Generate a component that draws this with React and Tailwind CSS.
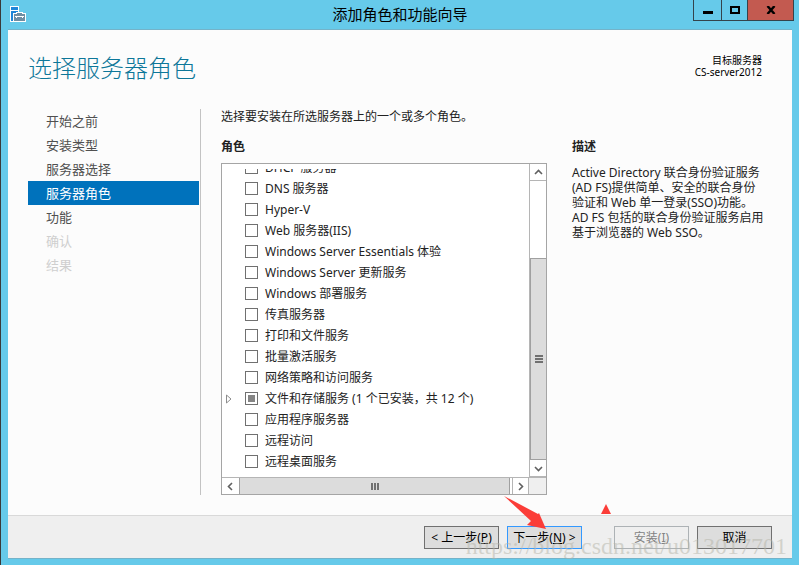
import React, { useState } from "react";

const steps = [
  { name: "开始之前" },
  { name: "安装类型" },
  { name: "服务器选择" },
  { name: "服务器角色", active: true },
  { name: "功能" },
  { name: "确认", disabled: true },
  { name: "结果", disabled: true },
];

const roles = [
  { id: "dhcp", name: "DHCP 服务器" },
  { id: "dns", name: "DNS 服务器" },
  { id: "hyperv", name: "Hyper-V" },
  { id: "iis", name: "Web 服务器(IIS)" },
  { id: "essentials", name: "Windows Server Essentials 体验" },
  { id: "wsus", name: "Windows Server 更新服务" },
  { id: "wds", name: "Windows 部署服务" },
  { id: "fax", name: "传真服务器" },
  { id: "print", name: "打印和文件服务" },
  { id: "volume", name: "批量激活服务" },
  { id: "npas", name: "网络策略和访问服务" },
  { id: "storage", name: "文件和存储服务 (1 个已安装，共 12 个)", partial: true },
  { id: "app", name: "应用程序服务器" },
  { id: "remote", name: "远程访问" },
  { id: "rds", name: "远程桌面服务" },
];

const ServerIcon = () => (
  <svg width="16" height="16" viewBox="0 0 16 16" className="shrink-0" shapeRendering="crispEdges" aria-hidden="true">
    <rect x="0" y="0" width="9" height="16" fill="#fff" />
    <rect x="1" y="1" width="7" height="3" fill="#1f86d8" />
    <rect x="1" y="5" width="7" height="10" fill="#1f86d8" />
    <path d="M3 7h3V6h7v1h3v9H3z" fill="#fff" />
    <path d="M4 8h11v7H4z" fill="#6f8ea3" />
    <path d="M7 7h5v1H7z" fill="#6f8ea3" />
    <path d="M5 10h9v1H5zM6 11h1v1H6zM12 11h1v1h-1z" fill="#fff" />
  </svg>
);

const Chevron = ({ d }) => (
  <svg width="9" height="9" viewBox="0 0 9 9" aria-hidden="true">
    <path d={d} fill="none" stroke="#606060" strokeWidth="1.6" />
  </svg>
);

const TitleBar = () => (
  <header className="relative flex h-[29px] items-start justify-end">
    <div className="absolute top-[6px] left-[9px]">
      <ServerIcon />
    </div>
    <h1 className="absolute inset-x-0 top-0 text-center text-[15px] leading-[29px] text-black">
      添加角色和功能向导
    </h1>
    <div className="relative mr-[5px] flex h-[21px] border border-t-0 border-[#34434b]">
      <button aria-label="最小化" className="flex w-[28px] items-center justify-center border-r border-[#34434b]">
        <span className="mt-1 h-[3px] w-[10px] bg-black" />
      </button>
      <button aria-label="最大化" className="flex w-[26px] items-center justify-center border-r border-[#34434b]">
        <span className="h-2 w-[10px] border-2 border-black" />
      </button>
      <button aria-label="关闭" className="flex w-[45px] items-center justify-center bg-[#c35a50]">
        <svg width="10" height="8" viewBox="0 0 10 8" aria-hidden="true">
          <path d="M1.5 0L8.5 8M8.5 0L1.5 8" stroke="#000" strokeWidth="2.4" />
        </svg>
      </button>
    </div>
  </header>
);

const StepNav = () => (
  <nav className="w-[173px] shrink-0 border-r border-[#c3c3c3] pr-px text-[13px] leading-6">
    {steps.map((s) => (
      <a
        key={s.name}
        href="#"
        aria-disabled={s.disabled}
        className={
          s.active
            ? "block bg-[#0072bc] pl-[18px] text-white"
            : s.disabled
            ? "block pl-[18px] text-[#cfcfcf]"
            : "block pl-[18px] text-[#505050]"
        }
      >
        {s.name}
      </a>
    ))}
  </nav>
);

const RoleRow = ({ role, checked, onToggle }) => (
  <li className="flex h-[21px] shrink-0 items-center">
    <span className="flex w-[23px] shrink-0 pl-1">
      {role.partial && (
        <svg width="6" height="10" viewBox="0 0 6 10" aria-hidden="true">
          <path d="M0.5 1L5 5L0.5 9z" fill="#fff" stroke="#8c8c8c" />
        </svg>
      )}
    </span>
    <input
      id={role.id}
      type="checkbox"
      checked={checked}
      onChange={onToggle}
      className={
        role.partial
          ? "size-[13px] shrink-0 appearance-none border border-[#707070] bg-[#858585] bg-clip-content p-[2px]"
          : "size-[13px] shrink-0 appearance-none border border-[#707070] bg-white checked:bg-[#858585]"
      }
    />
    <label htmlFor={role.id} className="pl-[7px] whitespace-nowrap">
      {role.name}
    </label>
  </li>
);

const RoleList = () => {
  const [selected, setSelected] = useState([]);

  const toggle = (id) => {
    setSelected(selected.includes(id) ? selected.filter((x) => x !== id) : [...selected, id]);
  };

  return (
    <div className="flex min-h-0 flex-1 flex-col border border-[#a5a5a5] bg-white">
      <div className="flex min-h-0 flex-1">
        <div className="flex min-w-0 flex-1 pt-[5px]">
          {/* scrolled to the end, so the first row is cut at the top */}
          <ul className="flex h-[308px] flex-1 flex-col justify-end overflow-hidden pb-[5px]">
            {roles.map((r) => (
              <RoleRow key={r.id} role={r} checked={selected.includes(r.id)} onToggle={() => toggle(r.id)} />
            ))}
          </ul>
        </div>
        <div className="flex w-[17px] flex-col border-l border-[#b5b5b5]">
          <button aria-label="向上" className="flex h-[17px] items-center justify-center border-b border-[#b5b5b5]">
            <Chevron d="M1 6L4.5 2.5L8 6" />
          </button>
          <div className="flex-[78]" />
          <div className="flex flex-[201] flex-col items-center justify-center gap-px border border-r-0 border-[#a0a0a0] bg-[#dcdcdc]">
            <span className="h-[2px] w-2 bg-[#707070]" />
            <span className="h-[2px] w-2 bg-[#707070]" />
            <span className="h-[2px] w-2 bg-[#707070]" />
          </div>
          <button aria-label="向下" className="flex h-[17px] items-center justify-center border-b border-[#b5b5b5]">
            <Chevron d="M1 3L4.5 6.5L8 3" />
          </button>
        </div>
      </div>
      <div className="flex h-[17px] border-t border-[#b5b5b5]">
        <button aria-label="向左" className="flex w-[17px] items-center justify-center">
          <Chevron d="M6 1L2.5 4.5L6 8" />
        </button>
        <div className="flex flex-1 items-center justify-center gap-px border border-y-0 border-[#a0a0a0] bg-[#dcdcdc]">
          <span className="h-[7px] w-[2px] bg-[#707070]" />
          <span className="h-[7px] w-[2px] bg-[#707070]" />
          <span className="h-[7px] w-[2px] bg-[#707070]" />
        </div>
        <button aria-label="向右" className="ml-[2px] flex w-[17px] items-center justify-center border-x border-[#b5b5b5]">
          <Chevron d="M3 1L6.5 4.5L3 8" />
        </button>
        <div className="w-[17px] bg-[#efefef]" />
      </div>
    </div>
  );
};

const Footer = () => (
  <footer className="relative flex h-[43px] items-start justify-end border-t border-[#d9d9d9] bg-[#efefef] px-5 pt-[10px] text-[12px] leading-5 text-black">
    <div className="flex gap-2">
      <button className="h-[23px] w-[75px] border border-[#707070] bg-[#dddddd] whitespace-nowrap">
        &lt; 上一步(<u>P</u>)
      </button>
      <div className="relative">
        <button className="h-[23px] w-[75px] border border-[#3399ff] bg-[#dddddd] whitespace-nowrap">
          下一步(<u>N</u>) &gt;
        </button>
        <svg
          width="44"
          height="34"
          viewBox="0 0 44 34"
          className="pointer-events-none absolute -top-[30px] -left-[3px]"
          aria-hidden="true"
        >
          <path d="M0 0L34 18L35 17L42 33L23 29L27 25Z" fill="#fb3d38" />
        </svg>
      </div>
    </div>
    <div className="ml-8 flex gap-2">
      <div className="relative">
        <button disabled className="h-[23px] w-[75px] border border-[#adb2b5] bg-[#efefef] text-[#838383]">
          安装(<u>I</u>)
        </button>
        <svg
          width="10"
          height="10"
          viewBox="0 0 10 10"
          className="pointer-events-none absolute -top-[22px] -left-[13px]"
          aria-hidden="true"
        >
          <path d="M5 0L10 10H0Z" fill="#fb3d38" />
        </svg>
      </div>
      <button className="h-[23px] w-[75px] border border-[#707070] bg-[#dddddd]">取消</button>
    </div>
    <p className="pointer-events-none absolute right-[5px] bottom-0 font-['Liberation_Serif',serif] text-[24px] leading-6 text-[#b4b4a8]/50">
      https://blog.csdn.net/u013017701
    </p>
  </footer>
);

export default function App() {
  return (
    <div className="flex min-h-screen flex-col border-l border-[#3a3a3a] bg-[#66caea] pb-[7px] font-['Noto_Sans','Noto_Sans_CJK_SC',sans-serif] text-[12px] text-[#222222]">
      <TitleBar />
      <main className="mr-[7px] ml-[7px] flex flex-1 flex-col border-y border-[#74b3c9] bg-[#fcfcfc]">
        <div className="flex justify-between pr-[30px] pl-5">
          <h2 className="pt-5 text-[24px] leading-9 font-light text-[#0d7799]">选择服务器角色</h2>
          <p className="pt-6 text-right text-[10px] leading-3 text-black">
            目标服务器
            <br />
            CS-server2012
          </p>
        </div>
        <div className="mt-[23px] mb-5 flex flex-1 px-5">
          <StepNav />
          <section className="ml-5 flex min-w-0 flex-1 flex-col">
            <p className="leading-4">选择要安装在所选服务器上的一个或多个角色。</p>
            <h3 className="mt-[14px] mb-2 leading-4 font-bold">角色</h3>
            <RoleList />
          </section>
          <section className="ml-[25px] w-[200px] shrink-0 pt-[30px]">
            <h3 className="leading-4 font-bold">描述</h3>
            <p className="mt-[10px] leading-[15px] whitespace-nowrap">
              Active Directory 联合身份验证服务
              <br />
              (AD FS)提供简单、安全的联合身份
              <br />
              验证和 Web 单一登录(SSO)功能。
              <br />
              AD FS 包括的联合身份验证服务启用
              <br />
              基于浏览器的 Web SSO。
            </p>
          </section>
        </div>
        <Footer />
      </main>
    </div>
  );
}
